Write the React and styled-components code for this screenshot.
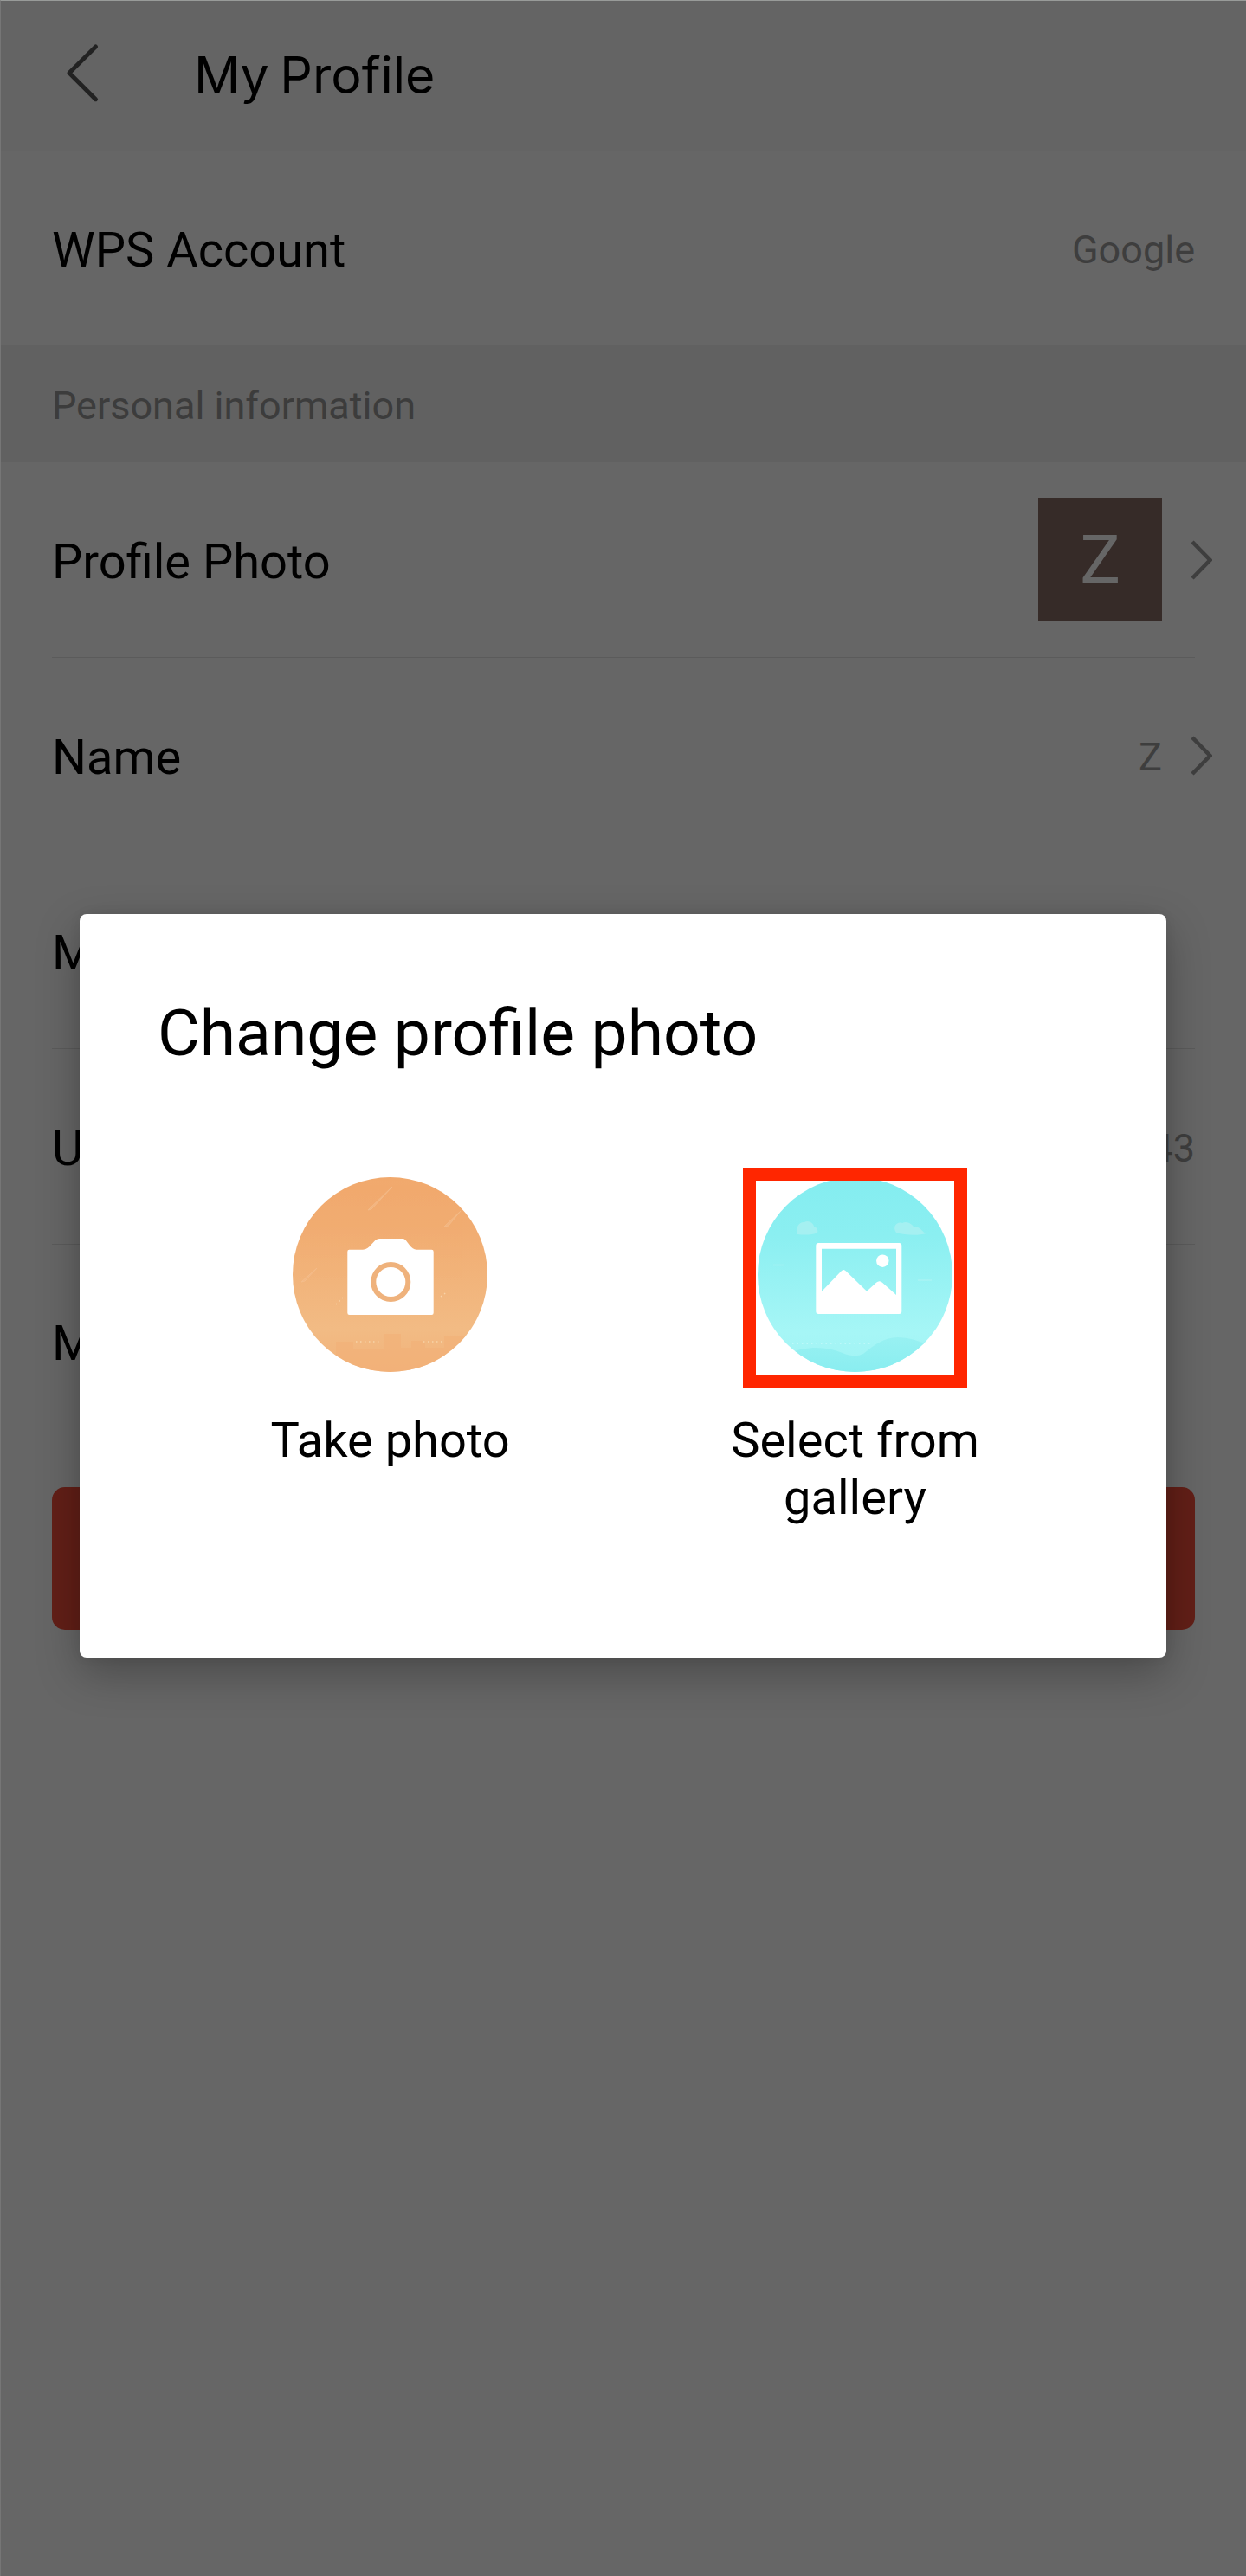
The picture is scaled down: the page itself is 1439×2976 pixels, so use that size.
import React from "react";
import styled, { createGlobalStyle } from "styled-components";

const GlobalStyle = createGlobalStyle`
  *, *::before, *::after { box-sizing: border-box; }
  html, body { margin: 0; padding: 0; background: #666; }
  body { font-family: Roboto, "Noto Sans", sans-serif; color: #000; }
`;

const Screen = styled.div`
  position: relative;
  width: 1439px;
  height: 2976px;
  overflow: hidden;
  background: #666;
  border-top: 1px solid #989b99;
  border-left: 1px solid #767676;
`;

const Header = styled.header`
  display: flex;
  align-items: center;
  height: 174px;
  padding: 0 0 2px 70px;
  background: #646464;
  border-bottom: 1px solid #5a5a5a;
`;

const BackButton = styled.button`
  display: flex;
  padding: 0;
  margin-top: -6px;
  border: 0;
  background: none;
`;

const HeaderTitle = styled.h1`
  margin: 0 0 0 103px;
  font: 400 59px/72px Inter, "Noto Sans", sans-serif;
  letter-spacing: ${(p) => p.$tracking}px;
  word-spacing: -4px;
  font-variant-ligatures: none;
`;

const Row = styled.div`
  display: flex;
  align-items: center;
  justify-content: space-between;
  height: ${(p) => p.$height || 226}px;
  margin: 0 59px;
  border-bottom: ${(p) => (p.$divider ? "1px solid #5b5b5b" : "0")};
`;

const RowLabel = styled.span`
  font-size: 56px;
  line-height: 66px;
  padding-top: 4px;
`;

const RowEnd = styled.div`
  display: flex;
  align-items: center;
  gap: 33px;
  margin-right: ${(p) => (p.$linked ? -20 : 0)}px;
`;

const RowValue = styled.span`
  font-size: 45px;
  line-height: 54px;
  padding-top: 4px;
  color: #3e3e3e;
`;

const SectionTitle = styled.h2`
  display: flex;
  align-items: center;
  height: 135px;
  margin: 0;
  padding: 4px 0 0 59px;
  background: #616161;
  color: #3c3c3c;
  font-size: 45px;
  font-weight: 400;
`;

const Avatar = styled.div`
  display: flex;
  align-items: center;
  justify-content: center;
  width: 143px;
  height: 143px;
  background: #362b28;
  color: #666;
  font-size: 78px;
  line-height: 92px;
`;

const SignOutButton = styled.button`
  display: block;
  width: 1320px;
  height: 165px;
  margin: 57px 0 0 59px;
  border: 0;
  border-radius: 15px;
  background: #621f17;
`;

const Modal = styled.div`
  position: absolute;
  inset: 0;
  padding: 1055px 92px 0 91px;
`;

const Dialog = styled.section`
  height: 859px;
  padding: 92px 90px 0;
  border-radius: 8px;
  background: #fff;
  box-shadow: 0 18px 50px rgba(0, 0, 0, 0.28), 0 0 14px rgba(0, 0, 0, 0.06);
`;

const DialogTitle = styled.h2`
  margin: 0;
  font-size: 75px;
  font-weight: 400;
  line-height: 90px;
`;

const Choices = styled.div`
  display: grid;
  grid-template-columns: 537px 537px;
  justify-items: center;
  margin-top: 122px;
`;

const Choice = styled.button`
  display: flex;
  flex-direction: column;
  align-items: center;
  gap: 46px;
  width: 300px;
  padding: 0;
  border: 0;
  background: none;
  color: #000;
  font: 400 56px/66px Roboto, "Noto Sans", sans-serif;
  text-align: center;
`;

const IconSlot = styled.span`
  position: relative;
  display: flex;
  width: 225px;
  height: 225px;
`;

const Highlight = styled.span`
  position: absolute;
  left: -17px;
  top: -11px;
  width: 259px;
  height: 255px;
  border: 15px solid #ff2600;
`;

const ChevronRight = () => (
  <svg width="25" height="46" viewBox="0 0 25 46" fill="none">
    <path d="M2 2 L22.5 23 L2 44" stroke="#3e3e3e" strokeWidth="4.6" />
  </svg>
);

const BackIcon = () => (
  <svg width="50" height="72" viewBox="0 0 50 72" fill="none">
    <path d="M39.5 6 L9 36.3 L39.5 66.7" stroke="#222" strokeWidth="5" strokeLinecap="round" strokeLinejoin="round" />
  </svg>
);

const CameraIcon = () => (
  <svg width="225" height="225" viewBox="0 0 225 225">
    <defs>
      <linearGradient id="dusk" x1="0" y1="0" x2="0" y2="1">
        <stop offset="0" stopColor="#f1a96d" />
        <stop offset="0.25" stopColor="#f1ac71" />
        <stop offset="0.78" stopColor="#f2bb84" />
        <stop offset="1" stopColor="#f2b27a" />
      </linearGradient>
      <clipPath id="duskDisc"><circle cx="112.5" cy="112.5" r="112.5" /></clipPath>
    </defs>
    <g clipPath="url(#duskDisc)">
      <rect width="225" height="225" fill="url(#dusk)" />
      <path d="M50 190h20v8h35V181h20v16h12v-8h16v8h22v-14h50v60H50z" fill="#f1b078" opacity="0.65" />
      <path d="M115 11L87 38l4-1zM194 39l-19 18 5-1zM28 105L10 121l4-1z" stroke="#f5c294" strokeWidth="1" fill="#f4ba87" opacity="0.65" />
      <path d="M50 147l8-8M171 138l8-6M73 190h28M151 190h21" stroke="#f8d3a8" strokeWidth="1.5" strokeDasharray="1.5 3.5" />
    </g>
    <path d="M65.3 83.7H81C89 83.7 93 72.5 98 71.4Q98.8 71 100 71H127Q128.5 71 130 72.2C133 75 137 83.7 143 83.7H160.5Q162.7 83.7 162.7 86V156.7Q162.7 159 160.5 159H65.5Q63.3 159 63.3 156.7V86Q63.3 83.7 65.3 83.7Z" fill="#fff" />
    <circle cx="113.3" cy="121" r="20" fill="none" stroke="#efb27c" strokeWidth="6" />
  </svg>
);

const GalleryIcon = () => (
  <svg width="225" height="225" viewBox="0 0 225 225">
    <defs>
      <linearGradient id="sky" x1="0" y1="0" x2="0" y2="1">
        <stop offset="0" stopColor="#84edf0" />
        <stop offset="0.3" stopColor="#8beff1" />
        <stop offset="0.8" stopColor="#a6f6f6" />
        <stop offset="1" stopColor="#a0f3f4" />
      </linearGradient>
      <linearGradient id="hill" x1="0" y1="0" x2="0" y2="1">
        <stop offset="0" stopColor="#98f1f2" />
        <stop offset="1" stopColor="#88edf0" />
      </linearGradient>
      <clipPath id="skyDisc"><circle cx="112.5" cy="112.5" r="112.5" /></clipPath>
    </defs>
    <g clipPath="url(#skyDisc)">
      <rect width="225" height="225" fill="url(#sky)" />
      <path d="M35 204C58 194 80 196 98 203Q112 209 122 204C134 194 146 185 162 185Q180 185 198 195V230H35Z" fill="url(#hill)" />
      <path d="M46 66C43 57 49 51 54 52C59 49 65 54 65 57C69 58 70 62 69 64C64 67 53 67 46 66Z" fill="#a5f0f1" />
      <path d="M160 64C155 57 161 51 167 53C172 50 178 54 180 57C188 56 190 64 195 65C185 68 170 67 160 64Z" fill="#a5f0f1" />
      <path d="M18 101.5H31M185 119H201" stroke="#a9f4f4" strokeWidth="1.5" />
      <path d="M40 192H130" stroke="#c5fafa" strokeWidth="1.5" strokeDasharray="1.5 4" />
    </g>
    <path fillRule="evenodd" d="M70.3 76H163.3Q166.3 76 166.3 79V155Q166.3 158 163.3 158H70.3Q67.3 158 67.3 155V79Q67.3 76 70.3 76ZM74 82.7V132L96.5 108.5Q99.3 105.5 102 108.5L126 131.7L137 121.8Q140.7 118.5 144 121.8L160 136V82.7Z" fill="#fff" />
    <circle cx="144.3" cy="96.7" r="7.2" fill="#fff" />
  </svg>
);

export default function App() {
  return (
    <>
      <GlobalStyle />
      <Screen>
        <Header>
          <BackButton aria-label="Back"><BackIcon /></BackButton>
          <HeaderTitle $tracking={0}>My Profile</HeaderTitle>
        </Header>
        <Row $height={224}>
          <RowLabel>WPS Account</RowLabel>
          <RowValue>Google</RowValue>
        </Row>
        <SectionTitle>Personal information</SectionTitle>
        <Row $divider>
          <RowLabel>Profile Photo</RowLabel>
          <RowEnd $linked><Avatar>Z</Avatar><ChevronRight /></RowEnd>
        </Row>
        <Row $divider>
          <RowLabel>Name</RowLabel>
          <RowEnd $linked><RowValue>Z</RowValue><ChevronRight /></RowEnd>
        </Row>
        <Row $divider><RowLabel>Mobile</RowLabel></Row>
        <Row $divider>
          <RowLabel>User ID</RowLabel>
          <RowValue>43</RowValue>
        </Row>
        <Row $height={223}><RowLabel>More</RowLabel></Row>
        <SignOutButton aria-label="Sign out" />
        <Modal>
          <Dialog role="dialog">
            <DialogTitle>Change profile photo</DialogTitle>
            <Choices>
              <Choice>
                <IconSlot><CameraIcon /></IconSlot>
                Take photo
              </Choice>
              <Choice>
                <IconSlot><GalleryIcon /><Highlight /></IconSlot>
                Select from gallery
              </Choice>
            </Choices>
          </Dialog>
        </Modal>
      </Screen>
    </>
  );
}
